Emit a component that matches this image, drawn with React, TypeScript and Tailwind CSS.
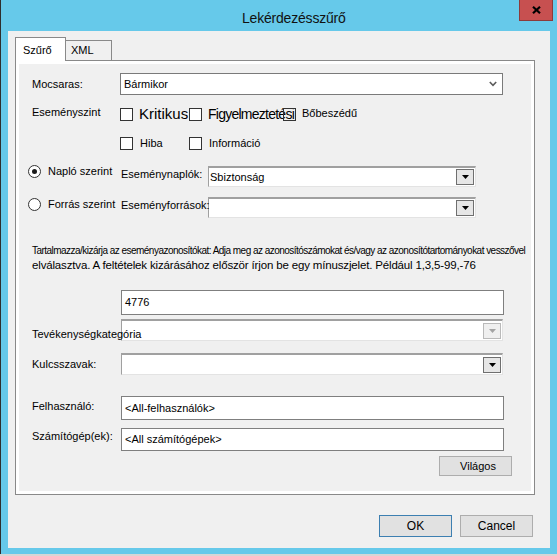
import React from "react";

const Checkbox = ({ className = "bg-white" }: { className?: string }) => (
    <span className={"inline-block w-[13px] h-[13px] shrink-0 border border-[#333333] " + className} />
);

const Radio = ({ checked }: { checked?: boolean }) => (
    <span className="w-[13px] h-[13px] shrink-0 rounded-full border border-[#333333] bg-white flex items-center justify-center">
        {checked && <span className="w-[5px] h-[5px] rounded-full bg-[#1a1a1a]" />}
    </span>
);

const Arrow = ({ disabled }: { disabled?: boolean }) => (
    <svg width="7" height="4" viewBox="0 0 7 4">
        <path d="M0 0h7L3.5 4z" fill={disabled ? "#a3a3a3" : "#000"} />
    </svg>
);

// old style combo with a sunken 3d edge
const Combo3D = ({ text, disabled, className = "" }: { text?: string; disabled?: boolean; className?: string }) => (
    <div className={"flex items-center bg-white border-t-2 border-l border-t-[#a0a0a0] border-l-[#a0a0a0] border-r border-b border-r-[#e3e3e3] border-b-[#e3e3e3] " + className}>
        <div className="flex-1 pl-[1px] leading-[13px] whitespace-nowrap">{text}</div>
        {disabled ? (
            <div className="w-[18px] h-[16px] mr-[1px] border border-[#b9b9b9] bg-[#efefef] flex items-center justify-center">
                <Arrow disabled />
            </div>
        ) : (
            <div className="w-[18px] h-[16px] mr-[1px] border border-[#6f6f6f] bg-[#e6e6e6] flex items-center justify-center">
                <Arrow />
            </div>
        )}
    </div>
);

const TextBox = ({ value, className = "" }: { value?: string; className?: string }) => (
    <div className={"flex items-center bg-white border border-[#7f7f7f] pl-[3px] leading-[13px] " + className}>
        {value}
    </div>
);

export default function App() {
    return (
        <div className="w-[557px] h-[556px] bg-[#d6d6d6] overflow-hidden text-[11px] text-black font-['Liberation_Sans',Arial,sans-serif]">
            <div className="h-[554px] bg-[#66c9ea] border-l border-l-[#2e2e2e] flex flex-col">

                {/* title bar */}
                <div className="h-[31px] flex shrink-0">
                    <div className="pl-[241px] mt-[10px] text-[14px] leading-[16px] tracking-[-0.2px] text-[#111] whitespace-nowrap">Lekérdezésszűrő</div>
                    <div className="ml-auto mr-[4px] w-[34px] h-[21px] bg-[#c75050] border border-t-0 border-[#8c3b3b] flex items-center justify-center">
                        <svg width="9" height="8" viewBox="0 0 9 8">
                            <path d="M1 0.8L8 7.2M8 0.8L1 7.2" stroke="#000" strokeWidth="2.2" />
                        </svg>
                    </div>
                </div>

                {/* client area */}
                <div className="ml-[7px] w-[542px] h-[517px] bg-[#f0f0f0] flex flex-col shrink-0">

                    <div className="ml-[7px] mt-[6px] h-[23px] flex items-end">
                        <div className="w-[51px] h-[24px] -mb-px relative z-10 bg-white border border-b-0 border-[#898989] pl-[7px] pt-[6px] leading-[13px]">
                            Szűrő
                        </div>
                        <div className="w-[46px] h-[20px] bg-[#f0f0f0] border-t border-r border-[#898989] pl-[5px] pt-[3px] leading-[13px]">
                            XML
                        </div>
                    </div>

                    <div className="ml-[7px] w-[520px] h-[435px] border border-[#898989] bg-white p-[3px]">
                        <div className="h-full bg-[#f0f0f0] pl-[13px] pt-[9px] flex flex-col">

                            {/* Mocsaras */}
                            <div className="flex items-center h-[22px]">
                                <div className="w-[88px] leading-[13px]">Mocsaras:</div>
                                <div className="w-[383px] h-[22px] bg-white border border-[#7a7a7a] flex items-center pl-[3px] pr-[5px]">
                                    <div className="flex-1 leading-[13px]">Bármikor</div>
                                    <svg width="8" height="6" viewBox="0 0 8 6">
                                        <path d="M0.8 1L4 4.4L7.2 1" stroke="#5c5c5c" strokeWidth="1.6" fill="none" />
                                    </svg>
                                </div>
                            </div>

                            {/* Eseményszint */}
                            <div className="flex items-center h-[20px] mt-[9px]">
                                <div className="w-[88px] leading-[13px] -mt-[3px]">Eseményszint</div>
                                <Checkbox />
                                <div className="ml-[6px] w-[50px] text-[15px] leading-[18px] whitespace-nowrap">Kritikus</div>
                                <Checkbox />
                                <div className="ml-[6px] text-[14px] leading-[18px] tracking-[-0.75px] whitespace-nowrap">Figyelmeztetési</div>
                                <Checkbox className="-ml-[11px] relative z-10" />
                                <div className="ml-[6px] leading-[13px] -mt-[2px]">Bőbeszédű</div>
                            </div>

                            <div className="flex items-center h-[21px] mt-[9px]">
                                <div className="w-[88px]" />
                                <Checkbox />
                                <div className="ml-[7px] w-[49px] leading-[13px]">Hiba</div>
                                <Checkbox />
                                <div className="ml-[7px] leading-[13px]">Információ</div>
                            </div>

                            {/* Napló szerint */}
                            <div className="flex items-start mt-[11px] -ml-[4px]">
                                <div className="w-[93px] flex items-center">
                                    <Radio checked />
                                    <div className="ml-[7px] leading-[13px] whitespace-nowrap">Napló szerint</div>
                                </div>
                                <div className="w-[87px] mt-[3px] leading-[13px] whitespace-nowrap">Eseménynaplók:</div>
                                <Combo3D text="Sbiztonság" className="w-[268px] h-[21px] mt-[1px]" />
                            </div>

                            {/* Forrás szerint */}
                            <div className="flex items-start mt-[10px] -ml-[4px]">
                                <div className="w-[93px] flex items-center mt-[1px]">
                                    <Radio />
                                    <div className="ml-[7px] leading-[13px] whitespace-nowrap">Forrás szerint</div>
                                </div>
                                <div className="w-[87px] mt-[2px] leading-[13px] whitespace-nowrap relative z-10">Eseményforrások:</div>
                                <Combo3D className="w-[268px] h-[21px]" />
                            </div>

                            {/* description */}
                            <div className="mt-[27px] text-[10px] leading-[12px] tracking-[-0.53px] whitespace-nowrap">
                                Tartalmazza/kizárja az eseményazonosítókat: Adja meg az azonosítószámokat és/vagy az azonosítótartományokat vesszővel
                            </div>
                            <div className="mt-[1px] text-[11.5px] leading-[15px] tracking-[-0.16px] whitespace-nowrap">
                                elválasztva. A feltételek kizárásához először írjon be egy mínuszjelet. Például 1,3,5-99,-76
                            </div>

                            <TextBox value="4776" className="ml-[89px] mt-[17px] w-[383px] h-[25px]" />

                            <div className="flex items-start mt-[4px]">
                                <div className="w-[89px] mt-[9px] leading-[13px] whitespace-nowrap relative z-10">Tevékenységkategória</div>
                                <Combo3D disabled className="w-[382px] h-[22px]" />
                            </div>

                            <div className="flex items-center mt-[12px]">
                                <div className="w-[89px] leading-[13px]">Kulcsszavak:</div>
                                <Combo3D className="w-[382px] h-[22px]" />
                            </div>

                            <div className="flex items-start mt-[21px]">
                                <div className="w-[89px] mt-[4px] leading-[13px]">Felhasználó:</div>
                                <TextBox value="<All-felhasználók>" className="w-[383px] h-[24px]" />
                            </div>

                            <div className="flex items-start mt-[8px]">
                                <div className="w-[89px] mt-[2px] leading-[13px] whitespace-nowrap">Számítógép(ek):</div>
                                <TextBox value="<All számítógépek>" className="w-[383px] h-[23px]" />
                            </div>

                            <div className="mt-[5px] ml-[407px] w-[73px] h-[20px] bg-[#e1e1e1] border border-[#adadad] flex items-center justify-center pl-[5px] leading-[13px]">
                                Világos
                            </div>
                        </div>
                    </div>

                    <div className="mt-[20px] flex justify-end gap-[8px] pr-[17px]">
                        <div className="w-[73px] h-[22px] bg-[#e1e1e1] border border-[#3c7fb1] flex items-center justify-center text-[12px] leading-[14px]">OK</div>
                        <div className="w-[73px] h-[22px] bg-[#e1e1e1] border border-[#adadad] flex items-center justify-center text-[12px] leading-[14px]">Cancel</div>
                    </div>
                </div>
            </div>
        </div>
    );
}
